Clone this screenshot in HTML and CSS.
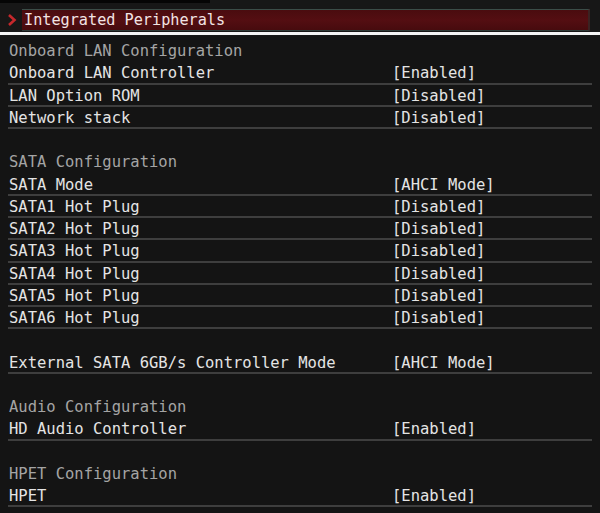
FILE: index.html
```html
<!DOCTYPE html>
<html>
<head>
<meta charset="utf-8">
<link rel="stylesheet" href="styles.css">
</head>
<body>
<div class="top">
  <div class="topstrip"></div>
  <div class="titlerow">
    <svg class="chev" width="10" height="12" viewBox="0 0 10 12"><path d="M2 1 L7.5 6 L2 11" fill="none" stroke="#c6282c" stroke-width="2.6"/></svg>
    <div class="titlebar">Integrated Peripherals</div>
  </div>
  <div class="whiteline"></div>
</div>
<div class="list">
  <div class="row head"><span>Onboard LAN Configuration</span></div>
  <div class="row item"><span>Onboard LAN Controller</span><span>[Enabled]</span></div>
  <div class="row item"><span>LAN Option ROM</span><span>[Disabled]</span></div>
  <div class="row item"><span>Network stack</span><span>[Disabled]</span></div>
  <div class="row blank"></div>
  <div class="row head"><span>SATA Configuration</span></div>
  <div class="row item"><span>SATA Mode</span><span>[AHCI Mode]</span></div>
  <div class="row item"><span>SATA1 Hot Plug</span><span>[Disabled]</span></div>
  <div class="row item"><span>SATA2 Hot Plug</span><span>[Disabled]</span></div>
  <div class="row item"><span>SATA3 Hot Plug</span><span>[Disabled]</span></div>
  <div class="row item"><span>SATA4 Hot Plug</span><span>[Disabled]</span></div>
  <div class="row item"><span>SATA5 Hot Plug</span><span>[Disabled]</span></div>
  <div class="row item"><span>SATA6 Hot Plug</span><span>[Disabled]</span></div>
  <div class="row blank"></div>
  <div class="row item"><span>External SATA 6GB/s Controller Mode</span><span>[AHCI Mode]</span></div>
  <div class="row blank"></div>
  <div class="row head"><span>Audio Configuration</span></div>
  <div class="row item"><span>HD Audio Controller</span><span>[Enabled]</span></div>
  <div class="row blank"></div>
  <div class="row head"><span>HPET Configuration</span></div>
  <div class="row item"><span>HPET</span><span>[Enabled]</span></div>
</div>
</body>
</html>
```

FILE: styles.css
```css
html, body {
  margin: 0;
  padding: 0;
  background: #141414;
  width: 600px;
  height: 513px;
  overflow: hidden;
  font-family: "DejaVu Sans Mono", "Liberation Mono", monospace;
}
.top {
  height: 36px;
  background: #171717;
  position: relative;
}
.topstrip {
  width: 210px;
  height: 3px;
  background: #050505;
}
.titlerow {
  display: flex;
  align-items: center;
  height: 24px;
  margin-top: 5px;
}
.chev {
  margin-left: 7px;
  margin-right: 5px;
  flex: none;
}
.titlebar {
  width: 568px;
  height: 22px;
  box-sizing: border-box;
  border-top: 1px solid #3b4d48;
  border-bottom: 1px solid #2f3a37;
  border-right: 2px solid #3a2222;
  background: linear-gradient(#4a0c0f, #540e12 50%, #470b0e);
  color: #f2e4e4;
  font-size: 15.2px;
  line-height: 20px;
  padding-left: 2px;
}
.whiteline {
  height: 3px;
  background: #f4f4f4;
  position: absolute;
  left: 0;
  right: 0;
  bottom: 1px;
}
.list {
  padding-top: 4px;
}
.row {
  height: 22.25px;
  box-sizing: border-box;
  display: grid;
  grid-template-columns: 383px auto;
  padding-left: 9px;
  width: 592px;
  font-size: 15.5px;
  line-height: 22px;
  color: #e4e4e4;
  white-space: pre;
}
.row.head {
  color: #a4a4a4;
}
.row.item {
  border-bottom: 2px solid #3e3e3e;
  margin-left: 8px;
  padding-left: 1px;
  width: 584px;
}
```
